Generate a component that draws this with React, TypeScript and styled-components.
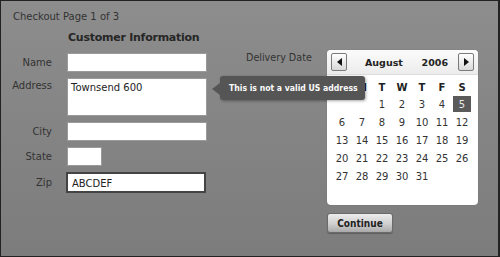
import styled, { createGlobalStyle } from "styled-components";

const GlobalStyle = createGlobalStyle`
  html, body {
    margin: 0;
    padding: 0;
    background: #7f7f7f;
  }
  * {
    box-sizing: border-box;
  }
`;

const WEEKDAYS = ["S", "M", "T", "W", "T", "F", "S"];
const FIRST_WEEKDAY = 2; // August 1st 2006 was a Tuesday
const DAYS_IN_MONTH = 31;
const SELECTED_DAY = 5;

const buildCells = () => {
  const cells: (number | null)[] = [];
  for (let i = 0; i < FIRST_WEEKDAY; i++) cells.push(null);
  for (let d = 1; d <= DAYS_IN_MONTH; d++) cells.push(d);
  while (cells.length < 42) cells.push(null);
  return cells;
};

const App = () => {
  const cells = buildCells();

  return (
    <Page>
      <GlobalStyle />
      <PageTitle>Checkout Page 1 of 3</PageTitle>
      <Body>
        <CustomerForm>
          <span />
          <Heading>Customer Information</Heading>

          <Label>Name</Label>
          <TextInput />

          <Label $top>Address</Label>
          <AddressCell>
            <AddressBox defaultValue="Townsend 600" />
            <Tooltip>This is not a valid US address</Tooltip>
          </AddressCell>

          <Label>City</Label>
          <TextInput />

          <Label>State</Label>
          <TextInput $width={35} />

          <Label>Zip</Label>
          <TextInput $focused defaultValue="ABCDEF" />
        </CustomerForm>

        <Delivery>
          <DeliveryLabel>Delivery Date</DeliveryLabel>
          <div>
            <Calendar>
              <CalendarHeader>
                <NavButton aria-label="previous month">
                  <Arrow $dir="left" />
                </NavButton>
                <MonthName>August</MonthName>
                <YearName>2006</YearName>
                <NavButton aria-label="next month">
                  <Arrow $dir="right" />
                </NavButton>
              </CalendarHeader>
              <DayGrid>
                {WEEKDAYS.map((d, i) => (
                  <WeekDay key={i}>{d}</WeekDay>
                ))}
                {cells.map((day, i) => (
                  <Day key={i} $selected={day === SELECTED_DAY}>
                    {day ?? ""}
                  </Day>
                ))}
              </DayGrid>
            </Calendar>
            <ContinueButton>Continue</ContinueButton>
          </div>
        </Delivery>
      </Body>
    </Page>
  );
};

const Page = styled.div`
  position: relative;
  width: 500px;
  height: 257px;
  overflow: hidden;
  border: 1px solid #222;
  border-right-width: 2px;
  background: linear-gradient(180deg, #8d8d8d 0%, #858585 45%, #7c7c7c 100%);
  font-family: "DejaVu Sans", Verdana, sans-serif;
  font-size: 10px;
  color: #2e2e2e;
`;

const PageTitle = styled.div`
  padding: 10px 0 0 12px;
  line-height: 12px;
  color: #333;
`;

const Body = styled.div`
  display: flex;
  align-items: flex-start;
  margin-top: 8px;
`;

const CustomerForm = styled.div`
  display: grid;
  grid-template-columns: 51px 142px;
  align-content: start;
  column-gap: 15px;
  row-gap: 6px;
  align-items: center;
`;

const Heading = styled.div`
  margin-left: 1px;
  margin-bottom: 2px;
  font-weight: bold;
  font-size: 11px;
  line-height: 14px;
  color: #262626;
  letter-spacing: -0.25px;
  white-space: nowrap;
`;

const Label = styled.div<{ $top?: boolean }>`
  align-self: ${(p) => (p.$top ? "start" : "center")};
  padding-top: ${(p) => (p.$top ? "2px" : "0")};
  text-align: right;
  color: #333;
  white-space: nowrap;
`;

const DeliveryLabel = styled.div`
  margin-top: 2px;
  font-size: 9.6px;
  color: #333;
  white-space: nowrap;
`;

const TextInput = styled.input<{ $width?: number; $focused?: boolean }>`
  display: block;
  width: ${(p) => (p.$width ? `${p.$width}px` : "140px")};
  height: ${(p) => (p.$focused ? "21px" : "19px")};
  margin: 0 0 0 ${(p) => (p.$focused ? "-1px" : "0")};
  padding: 1px 4px 0;
  border: ${(p) => (p.$focused ? "2px solid #444" : "1px solid #9a9a9a")};
  background: #fff;
  font-family: "DejaVu Sans", sans-serif;
  font-size: 10px;
  color: #222;
  outline: none;
`;

const AddressCell = styled.div`
  position: relative;
`;

const AddressBox = styled.textarea`
  display: block;
  width: 140px;
  height: 38px;
  margin: 0;
  padding: 2px 3px;
  border: 1px solid #9a9a9a;
  background: #fff;
  resize: none;
  font-family: "DejaVu Sans", sans-serif;
  font-size: 10px;
  line-height: 13px;
  color: #222;
  outline: none;
  overflow: hidden;
`;

const Tooltip = styled.div`
  position: absolute;
  left: 153px;
  top: -2px;
  z-index: 2;
  height: 24px;
  padding: 0 7px 0 9px;
  border-radius: 3px;
  background: #555;
  box-shadow: 1px 1px 3px rgba(0, 0, 0, 0.35);
  font-family: "DejaVu Sans Condensed", "DejaVu Sans", sans-serif;
  font-weight: bold;
  font-size: 8.6px;
  line-height: 24px;
  color: #fafafa;
  white-space: nowrap;

  &::before {
    content: "";
    position: absolute;
    left: -8px;
    top: 7px;
    border-style: solid;
    border-width: 6px 8px 6px 0;
    border-color: transparent #555 transparent transparent;
  }
`;

const Delivery = styled.div`
  display: grid;
  grid-template-columns: 81px 151px;
  margin-left: 37px;
  margin-top: 19px;
`;

const Calendar = styled.div`
  width: 151px;
  height: 155px;
  border-radius: 4px;
  background: #fff;
  box-shadow: 0 0 1px rgba(0, 0, 0, 0.3);
`;

const CalendarHeader = styled.div`
  display: flex;
  align-items: center;
  height: 25px;
  padding: 0 4px;
  border-radius: 4px 4px 0 0;
  background: linear-gradient(180deg, #fbfbfb 0%, #ececec 100%);
  border-bottom: 1px solid #dcdcdc;
`;

const NavButton = styled.button`
  display: flex;
  align-items: center;
  justify-content: center;
  width: 16px;
  height: 18px;
  padding: 0;
  border: 1px solid #7a7a7a;
  border-radius: 2px;
  background: linear-gradient(180deg, #ffffff 0%, #d8d8d8 100%);
  cursor: pointer;
`;

const Arrow = styled.span<{ $dir: "left" | "right" }>`
  width: 0;
  height: 0;
  border-style: solid;
  border-width: ${(p) => (p.$dir === "left" ? "4px 5px 4px 0" : "4px 0 4px 5px")};
  border-color: ${(p) =>
    p.$dir === "left"
      ? "transparent #111 transparent transparent"
      : "transparent transparent transparent #111"};
`;

const MonthName = styled.div`
  flex: 1;
  padding-left: 18px;
  font-weight: bold;
  font-size: 9.5px;
  color: #222;
`;

const YearName = styled.div`
  padding-right: 10px;
  font-weight: bold;
  font-size: 9.5px;
  color: #222;
`;

const DayGrid = styled.div`
  display: grid;
  grid-template-columns: repeat(7, 20px);
  grid-template-rows: 16px repeat(6, 18px);
  padding: 4px 0 0 5px;
`;

const WeekDay = styled.div`
  display: flex;
  align-items: center;
  justify-content: center;
  font-weight: bold;
  color: #222;
`;

const Day = styled.div<{ $selected?: boolean }>`
  display: flex;
  align-items: center;
  justify-content: center;
  margin: 1px 1px;
  background: ${(p) => (p.$selected ? "#5a5a5a" : "transparent")};
  color: ${(p) => (p.$selected ? "#e8e8e8" : "#333")};
`;

const ContinueButton = styled.button`
  display: block;
  width: 66px;
  height: 20px;
  margin-top: 8px;
  padding: 0;
  border: 1px solid #6a6a6a;
  border-radius: 3px;
  background: linear-gradient(180deg, #ececec 0%, #cfcfcf 55%, #a9a9a9 100%);
  box-shadow: 0 1px 1px rgba(0, 0, 0, 0.25);
  font-family: "DejaVu Sans Condensed", "DejaVu Sans", sans-serif;
  font-weight: bold;
  font-size: 10px;
  color: #222;
  cursor: pointer;
`;

export default App;
